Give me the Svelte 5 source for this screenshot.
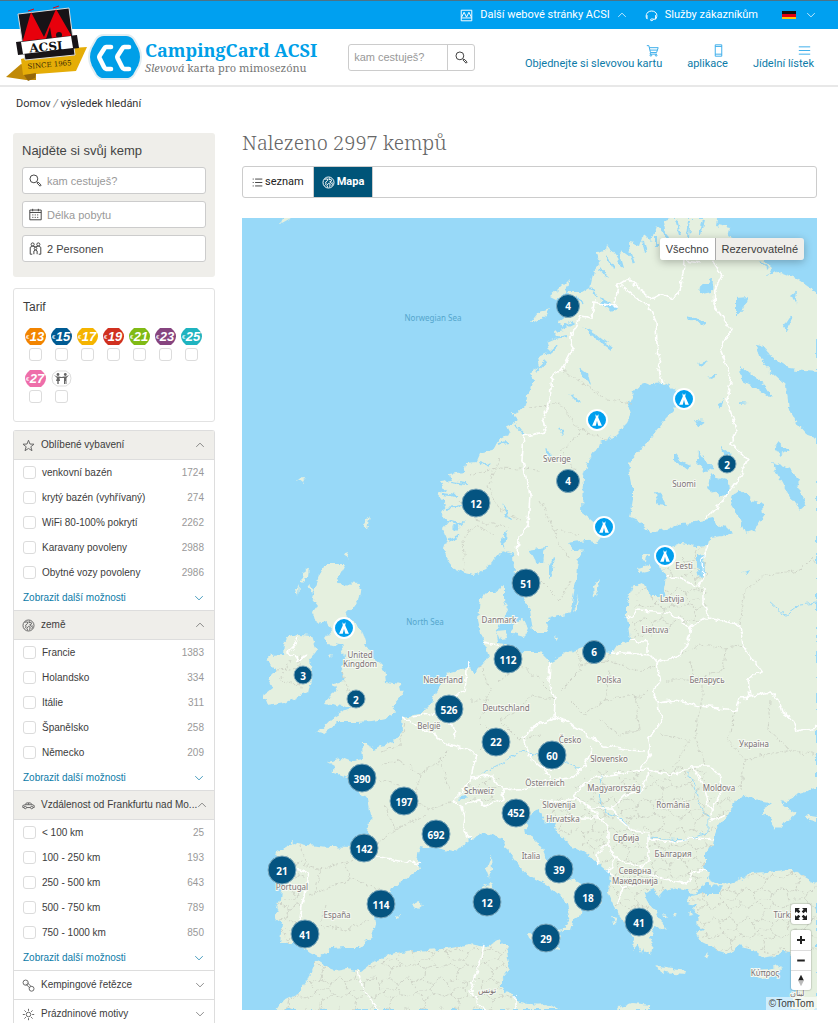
<script lang="ts">
   type Facet = { icon: string; title: string; items: [string, number][] };

   const prices = [
      { price: 13, color: "#f28400" },
      { price: 15, color: "#005b93" },
      { price: 17, color: "#f5b400" },
      { price: 19, color: "#d0301f" },
      { price: 21, color: "#80ba15" },
      { price: 23, color: "#86447f" },
      { price: 25, color: "#1fb3bf" },
      { price: 27, color: "#ee6eaa" },
   ];

   const facets: Facet[] = [
      {
         icon: "star",
         title: "Oblíbené vybavení",
         items: [
            ["venkovní bazén", 1724],
            ["krytý bazén (vyhřívaný)", 274],
            ["WiFi 80-100% pokrytí", 2262],
            ["Karavany povoleny", 2988],
            ["Obytné vozy povoleny", 2986],
         ],
      },
      {
         icon: "globe",
         title: "země",
         items: [
            ["Francie", 1383],
            ["Holandsko", 334],
            ["Itálie", 311],
            ["Španělsko", 258],
            ["Německo", 209],
         ],
      },
      {
         icon: "car",
         title: "Vzdálenost od Frankfurtu nad Mo...",
         items: [
            ["< 100 km", 25],
            ["100 - 250 km", 193],
            ["250 - 500 km", 643],
            ["500 - 750 km", 789],
            ["750 - 1000 km", 850],
         ],
      },
      { icon: "chain", title: "Kempingové řetězce", items: [] },
      { icon: "sun", title: "Prázdninové motivy", items: [] },
   ];

   // map viewport: origin and size of the drawing
   const map = { x: 242, y: 218, width: 575, height: 792 };

   const clusters: [number, number, number][] = [
      [568, 306, 4],
      [476, 503, 12],
      [568, 481, 4],
      [727, 464, 2],
      [526, 583, 51],
      [508, 659, 112],
      [594, 652, 6],
      [303, 675, 3],
      [356, 699, 2],
      [449, 709, 526],
      [496, 742, 22],
      [552, 755, 60],
      [362, 778, 390],
      [404, 801, 197],
      [516, 813, 452],
      [436, 834, 692],
      [364, 848, 142],
      [282, 870, 21],
      [381, 904, 114],
      [305, 934, 41],
      [487, 902, 12],
      [559, 869, 39],
      [588, 897, 18],
      [546, 938, 29],
      [639, 922, 41],
   ];

   const campsites: [number, number][] = [
      [597, 420],
      [684, 399],
      [604, 527],
      [665, 556],
      [344, 628],
   ];

   const countries: [number, number, string][] = [
      [557, 462, "Sverige"],
      [684, 487, "Suomi"],
      [684, 569, "Eesti"],
      [672, 602, "Latvija"],
      [655, 633, "Lietuva"],
      [499, 623, "Danmark"],
      [360, 658, "United"],
      [360, 667, "Kingdom"],
      [443, 683, "Nederland"],
      [429, 729, "België"],
      [506, 711, "Deutschland"],
      [609, 683, "Polska"],
      [707, 683, "Беларусь"],
      [570, 743, "Česko"],
      [754, 747, "Україна"],
      [609, 762, "Slovensko"],
      [545, 786, "Österreich"],
      [479, 794, "Schweiz"],
      [614, 791, "Magyarország"],
      [719, 791, "Moldova"],
      [559, 808, "Slovenija"],
      [563, 822, "Hrvatska"],
      [673, 808, "România"],
      [626, 841, "Србија"],
      [673, 857, "България"],
      [531, 859, "Italia"],
      [635, 874, "Северна"],
      [635, 884, "Македонија"],
      [292, 890, "Portugal"],
      [337, 918, "España"],
      [787, 918, "Türkiye"],
      [765, 976, "Κύπρος"],
      [797, 996, "لبنان"],
      [487, 993, "تونس"],
   ];

   const eurasia =
      "M448 561L444 548L447 540L442 528L448 521L440 512L446 504L438 494L446 490L440 482L452 480L450 474L464 472L466 464L476 463L480 454L492 451L498 440L510 434L506 426L518 420L512 414L524 408L526 398L531 390L534 380L530 373L540 366L538 357L549 352L547 343L556 339L553 331L563 329L558 320L566 314L560 310L573 301L568 292L582 292L590 287L594 270L600 262L597 254L606 250L607 244L617 258L622 250L630 256L629 243L640 246L644 234L652 242L657 226L666 236L664 221L673 218L717 218L716 225L730 228L728 236L744 243L741 252L760 257L772 268L768 276L780 272L796 278L817 293" +
      "L817 788L800 793L788 800L780 803L786 808L797 814L790 820L780 826L776 830L772 824L771 817L762 814L765 807L770 803L758 801L752 795L740 797L733 805L728 815L722 822L716 830L713 845L705 855L705 867L709 872L707 878L714 882L730 884L735 882L752 873L770 872L790 869L805 877L817 884" +
      "L817 1010L791 1010L797 985L795 960L791 953L783 952L773 956L763 958L753 950L737 946L730 955L720 952L712 947L702 942L697 933L704 931L695 923L700 916L692 910L696 905L687 903L690 897L703 894L717 894L722 888L708 883L697 890L693 896L688 889L677 887L663 890L658 896L654 889L645 893L647 903L655 910L662 923L668 931L657 926L652 930L655 937L649 937L652 945L650 955L644 948L642 953L638 944L633 950L634 938L627 927L620 917L612 903L608 893L610 873L598 863L583 853L567 843L557 830L550 818L545 824L540 810L532 812" +
      "L525 818L527 833L537 841L544 850L549 863L563 875L577 882L592 891L601 901L598 907L590 902L582 906L581 915L573 920L570 930L563 930L570 917L567 903L557 893L543 883L530 877L520 868L512 857L502 840L493 834L485 832L473 838L468 843L453 852L446 850L435 848L420 846L417 858L421 868L405 880L392 888L386 900L374 912L375 925L372 937L360 947L345 947L332 948L320 957L310 952L298 943L280 943L282 923L274 918L280 900L282 880L276 853L284 848L293 842L307 845L330 847L350 848L366 840L368 833L371 815L368 800L362 793L348 778L332 772L335 766L328 762L342 758L352 762L363 760L362 743L368 743L372 749L385 745L394 742L402 733L401 718L422 713L432 703L438 687L442 680L448 673L456 671L468 667L474 673L482 665L489 657L487 648L483 642L478 620L480 600L488 592L495 592L504 585L504 600L508 610L502 620L497 633L498 643L508 645L508 653L525 652L540 652L550 662L573 650L590 645L604 652L612 653L617 645L630 640L627 618L627 603L633 587L643 583L652 597L664 597L667 577L660 567L655 552L668 548L683 543L695 546L708 545L710 538L722 536L733 533L727 528L717 525L713 518L695 522L680 523L665 530L650 533L640 522L630 518L633 500L633 487L628 463L643 447L655 432L667 417L677 407L675 390L663 383L650 385L643 382L633 393L628 405L631 415L627 423L613 437L600 443L587 463L583 477L582 513L590 519L602 530L597 543L580 553L577 567L575 587L570 613L550 618L545 632L533 632L530 610L522 597L519 580L514 570L513 553L502 550L492 563L475 575L465 573L455 570Z";

   const africa =
      "M276 1010L283 1000L298 993L308 980L315 962L320 960L324 966L335 970L347 968L361 971L372 963L385 957L400 953L415 951L440 949L470 944L486 947L498 940L503 945L510 945L507 953L510 968L500 980L500 988L513 995L520 1002L530 1003L545 1005L560 1010Z";

   const islands = [
      "M326 564L346 564L340 575L336 584L361 585L358 600L351 610L345 614L356 624L362 630L366 643L372 655L382 665L385 675L386 682L400 684L402 695L392 706L397 712L386 718L372 721L355 722L338 722L322 734L318 733L332 718L342 712L352 708L342 706L325 703L331 694L337 690L333 683L344 681L341 672L345 660L341 645L326 643L324 640L332 630L328 622L316 624L313 613L318 606L312 598L316 585L320 574Z",
      "M288 637L300 635L312 636L317 650L309 660L312 675L308 692L285 703L267 706L263 696L273 688L268 678L276 670L267 661L270 655L283 654L284 644Z",
      "M301 574L309 568L308 576L302 582Z",
      "M308 585L314 590L311 594Z",
      "M296 590L299 584L298 598Z",
      "M344 553L349 551L347 558Z",
      "M329 656L332 653L331 659Z",
      "M486 870L491 856L492 870L489 878Z",
      "M482 887L491 882L494 892L491 910L483 911Z",
      "M527 933L545 934L562 929L558 944L559 950L548 947L530 940Z",
      "M497 632L506 631L507 638L500 639Z",
      "M512 626L524 617L528 626L524 637L513 634Z",
      "M593 586L600 579L597 592L594 597Z",
      "M573 612L579 594L576 610Z",
      "M554 635L558 637L556 641Z",
      "M638 568L651 564L650 571L640 573Z",
      "M642 555L648 555L647 561L643 560Z",
      "M655 966L672 969L686 971L685 974L664 972Z",
      "M755 970L768 969L782 965L774 974L764 979L757 976Z",
      "M411 904L418 901L423 905L417 910Z",
      "M396 916L400 915L398 919Z",
      "M296 479L305 478L302 484Z",
      "M364 525L370 516L367 530Z",
      "M688 913L694 914L692 917Z",
      "M672 916L677 914L675 918Z",
      "M663 913L668 918L664 918Z",
      "M704 957L709 952L707 959Z",
      "M612 917L617 918L616 924Z",
      "M530 322L538 312L550 308L545 316L534 322Z",
      "M550 297L558 290L569 279L566 292L556 300Z",
      "M282 218L291 218L280 224Z",
      "M532 1004L546 1003L558 1010L530 1010Z",
      "M617 1008L632 1003L650 1005L650 1010L618 1010Z",
      "M805 815L817 817L817 822L806 819Z",
   ];

   const lakes = [
      "M757 345L763 346L770 355L780 362L790 369L805 371L817 372L817 438L806 434L797 424L789 410L786 385L775 375L765 366L760 357Z",
      "M733 495L740 490L752 500L763 505L764 515L754 530L745 533L738 516L730 503Z",
      "M780 478L790 480L800 490L806 505L800 510L792 500Z",
      "M697 555L704 554L705 573L700 577L697 567Z",
      "M528 550L545 547L543 563L535 562Z",
      "M549 567L553 558L556 560L549 580Z",
      "M567 543L585 540L600 544L592 551L573 550Z",
      "M698 290L713 277L712 292L702 294Z",
      "M736 298L748 297L742 310L736 317Z",
      "M688 315L700 319L706 323L703 325L690 319Z",
      "M582 326L597 335L613 348L611 350L595 338Z",
      "M600 297L616 307L612 312L602 303Z",
      "M740 365L749 373L764 384L771 395L768 397L755 387L741 380Z",
      "M778 441L788 450L780 456L774 447Z",
      "M772 462L788 468L800 480L797 487L780 480Z",
      "M694 420L706 421L698 427Z",
      "M675 453L682 462L691 466L687 470L675 461Z",
      "M698 450L706 462L714 468L706 472L697 462Z",
      "M720 446L731 456L724 456Z",
      "M710 475L728 480L729 492L720 497L708 488Z",
      "M654 490L661 496L666 506L658 505Z",
      "M784 325L790 316L791 324L786 332Z",
      "M792 295L797 291L795 304Z",
      "M742 572L750 570L747 575Z",
      "M698 364L708 360L702 367Z",
      "M708 376L718 373L714 378Z",
      "M717 405L724 400L720 410Z",
      "M740 402L749 403L741 404Z",
      "M580 368L588 374L591 386L584 379Z",
      "M569 393L582 403L578 404Z",
      "M558 428L562 430L563 437Z",
      "M545 450L552 454L550 460Z",
      "M500 540L507 532L505 548Z",
      "M452 527L466 520L456 531Z",
      "M502 503L508 513L512 521L505 514Z",
      "M704 887L722 885L720 892L706 892Z",
      "M457 798L465 796L464 799Z",
   ];

   // jagged inlets along the Norwegian coast
   const fjords = "M536 372L546 362M545 356L556 346M556 338L568 336M562 328L574 322M575 296L584 304M590 286L598 298M598 268L608 276M606 256L614 268M618 254L622 268M630 252L634 262M643 240L646 254M656 236L656 248M664 230L670 244M676 220L680 234M690 220L688 236M704 220L700 234M730 240L738 250M768 268L760 262M516 424L524 434M498 444L508 442M480 462L490 466M452 482L466 484M442 494L456 496M446 508L462 506M444 520L458 524M448 540L458 536";

   const borders = [
      "M701 262L684 260L683 275L680 290L673 300L662 294L652 299L640 290L630 278L618 286L615 306L594 302L592 318L580 316L571 336L573 348L562 370L552 375L550 400L542 418L546 432L524 436L522 460L530 495L528 525L518 540L517 556",
      "M622 286L640 301L650 308L656 322L657 345L660 360L658 370L663 383",
      "M712 260L722 275L715 290L714 305L731 330L720 350L731 376L727 400L737 430L731 442L748 460L738 480L722 502L706 518",
      "M708 545L702 560L703 578L698 587L686 582L676 577L666 578",
      "M627 618L637 611L655 612L670 613L691 627L708 617L703 600L703 588",
      "M691 627L688 640L681 655L657 663L650 655L612 652",
      "M630 640L647 642L647 653",
      "M708 617L722 620L740 626L743 645L753 660L762 672L748 678L750 697L770 692L778 700L782 712L794 720L797 732L817 728",
      "M657 663L660 680L653 694L658 703L675 700L700 706L718 708L737 710L740 698L750 697",
      "M658 703L661 722L648 740L650 755L640 770",
      "M550 662L549 682L555 700L554 718L530 729L524 738L530 758L545 770L560 768",
      "M554 718L568 722L575 728L592 738L605 746L625 750L645 751",
      "M545 770L552 780L570 778L585 765L592 748",
      "M592 778L640 770L655 771L672 775L693 766L710 766L721 778L722 790L710 813L711 820L725 814",
      "M693 766L705 790L711 813",
      "M573 795L592 778M573 795L590 808L612 808L625 795L642 790L650 772",
      "M590 808L600 818L608 826L608 845L596 855L598 863",
      "M612 808L620 820L632 830L648 832L650 840L675 842L697 838L714 840",
      "M608 845L615 858L607 872M615 858L640 868L648 860L648 838M640 868L665 880L688 884L692 872L707 870",
      "M610 873L622 888L618 904M622 888L650 880",
      "M540 800L560 802L575 798M562 818L605 818",
      "M468 660L465 690L450 700L440 712L412 717M440 712L452 724L455 738M430 731L447 744L470 750L476 754L471 778L465 788L453 800L462 805L465 818L463 832L472 838",
      "M471 778L492 776L502 790L503 800L485 806L478 800L465 805M502 790L530 788L545 780",
      "M364 857L378 857L400 860L420 864",
      "M283 869L300 870L310 874L305 890L302 905L300 920L297 943",
      "M357 971L364 990L378 1010M484 945L478 970L470 990L484 1010M516 996L516 1010",
      "M308 654L300 660L288 652L295 645L298 638",
      "M483 642L497 645",
      "M402 717L420 727L430 731",
   ];

   const regions = [
      "M563 370L580 382L608 400L632 404M530 408L560 403L580 430L605 440M585 430L560 450L575 470M470 475L500 468L540 470M460 500L475 520L508 528M465 570L463 540L475 525L495 535M500 460L488 485L500 510L520 520",
      "M555 700L530 695L520 710L500 720L520 740L540 735M480 665L490 690L480 720L495 735L480 750M500 680L520 665L540 680L550 690M470 700L490 700",
      "M578 650L580 670L560 690M580 665L605 660L612 652M605 660L640 672L655 665M605 700L585 715L570 700M605 700L635 695L640 730M635 700L650 690M600 720L620 735L640 730M605 700L610 670",
      "M670 660L700 645L725 648L723 670L695 680L665 680M725 648L745 645M702 680L702 706M690 660L695 680",
      "M700 706L695 740L705 765M735 711L728 740L745 760L740 790M770 700L768 730L790 750L817 755M660 735L690 740M745 760L790 750M690 740L672 770",
      "M382 752L400 745L405 725M400 760L380 765M400 760L420 775L440 760L450 750M420 775L415 800L430 810L455 800M385 805L395 830L375 845M395 830L425 815M440 760L450 790M380 780L400 785",
      "M300 845L305 865L320 870L350 860L360 845M310 895L335 885L355 880L380 890M325 905L320 925L345 930L370 920M345 860L350 880M320 870L315 895",
      "M740 625L745 590L765 575L800 570L812 558L817 565",
      "M290 660L280 680L300 685M300 655L300 690M275 670L305 668M341 672L350 700",
      "M540 500L550 520L560 545L570 560M530 570L560 600L570 580M555 530L580 535",
   ];

   const uid = $props.id();
   let view = $state("map");
   let onlyBookable = $state(true);
   let open = $state([true, true, true, false, false]);

   const size = (count: number) => (count >= 10 ? "large" : count >= 4 ? "medium" : "small");
   const place = (x: number, y: number) =>
      `left: ${((x - map.x) / map.width) * 100}%; top: ${((y - map.y) / map.height) * 100}%`;
</script>

{#snippet icon(name: string)}
   <svg class="icon {name}" viewBox="0 0 16 16" aria-hidden="true">
      {#if name === "star"}
         <path d="M8 1.5L9.8 6.2L14.8 6.4L10.9 9.5L12.3 14.4L8 11.6L3.7 14.4L5.1 9.5L1.2 6.4L6.2 6.2Z" />
      {:else if name === "globe"}
         <circle cx="8" cy="8" r="6.8" />
         <path d="M3 4L6.5 3.5L7 5.5L4.5 7.5L5 10L3.5 11.5M7 14L6 11.5L8 9L10 10L9.5 13.5M9 2L8.5 4.5L11 4L12 6L9.5 7L11 9L13.5 8.5M12 12L13 10" />
      {:else if name === "car"}
         <path d="M1 10.5V8L4 7L5.5 4.8H10.5L12.5 7L15 8V10.5H13.5M10.5 10.5H5.5M2.5 10.5H1M4 7H12.5M8 5V7" />
         <circle cx="4" cy="10.5" r="1.5" />
         <circle cx="12" cy="10.5" r="1.5" />
      {:else if name === "chain"}
         <circle cx="4.5" cy="4.5" r="3.2" />
         <circle cx="11.8" cy="12" r="3" />
         <path d="M4.5 6L9.5 11M6.5 4.5L11.5 9.5" />
      {:else if name === "sun"}
         <circle cx="8" cy="8" r="2.8" />
         <path d="M8 1V3.5M8 12.5V15M1 8H3.5M12.5 8H15M3 3L4.8 4.8M11.2 11.2L13 13M13 3L11.2 4.8M4.8 11.2L3 13" />
      {:else if name === "search"}
         <circle cx="6" cy="6" r="4.8" />
         <path d="M9.4 9.4L10.6 10.6M10 11.2L11.2 10L15 13.6L13.6 15Z" />
      {:else if name === "calendar"}
         <path d="M1 2.5H15V14.5H1ZM1 5.5H15M4.5 1V4M11.5 1V4" />
         <path stroke-dasharray="1.4 1.6" d="M4 8.5H13M4 11.5H13" />
      {:else if name === "people"}
         <circle cx="4.5" cy="3" r="1.9" />
         <circle cx="11.5" cy="3" r="1.9" />
         <circle cx="8" cy="8" r="1.6" />
         <path d="M4 15H1.5V6.5L4.5 5L8 6L11.5 5L14.5 6.5V15H12M6 15V11L8 9.8L10 11V15" />
      {:else if name === "up"}
         <path d="M2 11L8 5L14 11" />
      {:else if name === "down"}
         <path d="M2 5L8 11L14 5" />
      {:else if name === "list"}
         <path d="M1 3H2.5M1 8H2.5M1 13H2.5M4.5 3H15M4.5 8H15M4.5 13H15" />
      {:else if name === "acsi"}
         <path d="M1.5 1.5H14.5V14.5H1.5ZM1.5 11H14.5M2 10L5 4L8 10L11 4L14 10" />
      {:else if name === "headset"}
         <path d="M3 12.5C0 10.5 1 2.5 8 2.5C15 2.5 16 9 13 12.5H10.5M2.5 7.5V12M13 7.5V12.5M10.5 12.5C10 14.5 7 15 6.5 13.5C7 12 9 12 10.5 12.5" />
      {:else if name === "cart"}
         <path d="M1 2H3.5L5.5 10.5H13L15 4.5H4.2M4.8 7.5H14M5.5 10.5L5 12.5H13.5" />
         <circle cx="6" cy="14" r="1" />
         <circle cx="12.5" cy="14" r="1" />
      {:else if name === "phone"}
         <path d="M4 1H12V15H4ZM4 3H12M4 12.5H12" />
      {:else if name === "menu"}
         <path d="M1 3.5H15M1 8H15M1 12.5H15" />
      {/if}
   </svg>
{/snippet}

<header>
   <div class="topbar">
      <button class="top-item">{@render icon("acsi")}Další webové stránky ACSI {@render icon("up")}</button>
      <a class="top-item" href="#service">{@render icon("headset")}Služby zákazníkům</a>
      <button class="top-item language" aria-label="Deutsch">
         <svg class="flag" viewBox="0 0 14 8" aria-hidden="true">
            <path fill="#111" d="M0 0H14V3H0Z" />
            <path fill="#e00012" d="M0 3H14V6H0Z" />
            <path fill="#ffc20e" d="M0 6H14V8H0Z" />
         </svg>
         {@render icon("down")}
      </button>
   </div>

   <div class="masthead">
      <a class="brand" href="#home">
         <svg class="acsi-logo" viewBox="0 0 82 78" aria-hidden="true">
            <path fill="#c18a08" d="M0 72L15 59L30 64L30 75L20 75Z" />
            <path fill="#e5ad07" d="M15 54L66 43L81 42L70 66L17 70Z" />
            <path fill="#94670a" d="M18 70L30 68L29 73L22 76Z" />
            <path fill="#171317" stroke="#ddd" d="M12 9L63 3L69 50L19 55Z" />
            <path fill="#e8000c" d="M25 7L38 32L50 4L65 30L66 36L15 42Z" />
            <path fill="#171317" d="M31 24L39 37L44 22L46 34L39 37Z" />
            <circle cx="53" cy="30" r="3" fill="#171317" />
            <path fill="#171317" d="M10 37L71 30L73 43L12 50Z" />
            <path fill="#fff" d="M15 37L65 31L67 43L17 49Z" />
            <path stroke="#e8000c" d="M22 6L28 4M47 3L53 1" />
            <g transform="rotate(-5 42 42)">
               <text class="logo-name" x="40" y="46">ACSI</text>
               <text class="logo-since" x="42" y="62">SINCE 1965</text>
            </g>
         </svg>
         <svg class="cc-logo" viewBox="0 0 54 46" aria-hidden="true">
            <path fill="#009fe8" stroke="#e2edf2" stroke-width="2" d="M16 1H38Q43 1 46 5L51 14Q55 23 51 32L46 41Q43 45 38 45H16Q11 45 8 41L3 32Q-1 23 3 14L8 5Q11 1 16 1Z" />
            <path fill="none" stroke="#fff" stroke-width="4.6" stroke-linejoin="round" stroke-linecap="round" d="M23 13H18Q17 13 16 15L11.500 22Q11 23 11.500 24L16 33Q17 35 18 35H23M41 13H36Q35 13 34 15L29.500 22Q29 23 29.500 24L34 33Q35 35 36 35H41" />
         </svg>
         <span class="brand-text">
            <strong>CampingCard ACSI</strong>
            <small><em>Slevová</em> karta pro mimosezónu</small>
         </span>
      </a>

      <form class="quick-search">
         <input placeholder="kam cestuješ?" aria-label="kam cestuješ?" />
         <button aria-label="Hledat">{@render icon("search")}</button>
      </form>

      <nav>
         <a href="#card">{@render icon("cart")}Objednejte si slevovou kartu</a>
         <a href="#app">{@render icon("phone")}aplikace</a>
         <a href="#menu">{@render icon("menu")}Jídelní lístek</a>
      </nav>
   </div>
</header>

<div class="breadcrumb"><a href="#home">Domov</a> <i>/</i> <span>výsledek hledání</span></div>

<div class="page">
   <aside>
      <form class="finder">
         <h2>Najděte si svůj kemp</h2>
         <div class="field">{@render icon("search")}<input placeholder="kam cestuješ?" aria-label="kam cestuješ?" /></div>
         <div class="field">{@render icon("calendar")}<input placeholder="Délka pobytu" aria-label="Délka pobytu" /></div>
         <button type="button" class="field">{@render icon("people")}2 Personen</button>
      </form>

      <section class="rates">
         <h3>Tarif</h3>
         <div class="rate-list">
            {#each prices as { price, color }}
               <label>
                  <svg viewBox="0 0 21 17" aria-hidden="true">
                     <path fill={color} d="M5 0H16L19 3Q23 8 19 14L16 17H5L2 14Q-2 8 2 3Z" />
                     <text class="euro" x="1" y="11">€</text>
                     <text class="price" x="12" y="13">{price}</text>
                  </svg>
                  <input type="checkbox" aria-label="€ {price}" />
               </label>
            {/each}
            <label>
               <svg viewBox="0 0 21 17" aria-hidden="true">
                  <path fill="#fff" stroke="#ddd" d="M6 1H15L19 4Q21 8 19 13L15 16H6L2 13Q0 8 2 4Z" />
                  <path fill="#666" d="M3 5L6 6.500H8L10.500 7L13 6.500H15L18 5L15.500 8V14H14.500V11H14V14H13V8H8.500L9 11H8V14H7.300V11H6.700V14H6V11H5L6 8Z" />
                  <circle cx="7" cy="4.500" r="1.400" fill="#666" />
                  <circle cx="14.300" cy="4.500" r="1.400" fill="#666" />
               </svg>
               <input type="checkbox" aria-label="Děti" />
            </label>
         </div>
      </section>

      <section class="facets">
         {#each facets as { icon: name, title, items }, i}
            <button class="facet-head" class:opened={open[i]} onclick={() => (open[i] = !open[i])}>
               {@render icon(name)}
               <span>{title}</span>
               {@render icon(open[i] ? "up" : "down")}
            </button>
            {#if open[i]}
               <div class="facet-body">
                  {#each items as [label, count], j}
                     <div class="option">
                        <input type="checkbox" id="{uid}-{i}-{j}" />
                        <label for="{uid}-{i}-{j}">{label}</label>
                        <span>{count}</span>
                     </div>
                  {/each}
                  <button class="more">Zobrazit další možnosti {@render icon("down")}</button>
               </div>
            {/if}
         {/each}
      </section>
   </aside>

   <main>
      <h1>Nalezeno 2997 kempů</h1>

      <div class="tabs">
         <button class:active={view === "list"} onclick={() => (view = "list")}>{@render icon("list")}seznam</button>
         <button class:active={view === "map"} onclick={() => (view = "map")}>{@render icon("globe")}Mapa</button>
      </div>

      <div class="map">
         <svg class="canvas" viewBox="{map.x} {map.y} {map.width} {map.height}" aria-hidden="true">
            <defs>
               <filter id="rough" x="0" y="0" width="100%" height="100%">
                  <feTurbulence type="fractalNoise" baseFrequency="0.14" numOctaves="3" seed="7" />
                  <feDisplacementMap in="SourceGraphic" scale="7" xChannelSelector="R" yChannelSelector="G" />
               </filter>
               <pattern id="districts" width="34" height="30" patternUnits="userSpaceOnUse">
                  <path class="region" d="M0 8L9 3L17 9L15 19L25 24L34 17M17 9L27 5L34 8M9 3L12 0M25 24L22 30L12 30M15 19L5 22L0 17M27 5L24 0M5 22L7 30" />
               </pattern>
               <clipPath id="dense">
                  <path d="M275 960L520 940L520 1010L275 1010ZM590 770L650 770L700 765L740 800L700 880L620 930L600 860L540 815ZM690 880L817 865L817 960L690 950ZM640 580L705 545L710 620L630 640ZM465 780L500 778L500 800L465 805ZM275 850L305 860L300 945L275 945Z" />
               </clipPath>
            </defs>
            <rect class="sea" x={map.x} y={map.y} width={map.width} height={map.height} />
            <g filter="url(#rough)">
               <g class="land">
                  <path d={eurasia} />
                  <path d={africa} />
                  {#each islands as d}
                     <path {d} />
                  {/each}
               </g>
               <g clip-path="url(#dense)" fill="url(#districts)">
                  <path d={eurasia} />
                  <path d={africa} />
               </g>
               {#each regions as d}
                  <path class="region" {d} />
               {/each}
               {#each lakes as d}
                  <path class="sea" {d} />
               {/each}
               <path class="fjord" d={fjords} />
               <path class="river" d="M480 774L500 764L520 752L540 755L580 768M602 775L600 800L605 812L620 818L630 828M687 772L695 785L700 805L708 818L708 832L688 840M770 602L785 615L800 604L817 602M648 838L688 840" />
               {#each borders as d}
                  <path class="border" {d} />
               {/each}
            </g>
            <text class="sea-name" x="433" y="321">Norwegian Sea</text>
            <text class="sea-name" x="425" y="625">North Sea</text>
            {#each countries as [x, y, name]}
               <text class="country" {x} {y}>{name}</text>
            {/each}
         </svg>

         {#each campsites as [x, y]}
            <button class="marker campsite" style={place(x, y)} aria-label="Kemp">
               <svg viewBox="0 0 22 22" aria-hidden="true">
                  <path fill="#fff" d="M9 4L11 6L13 4L12.500 8L17 18H12.500L11 12L9.500 18H5L9.500 8Z" />
               </svg>
            </button>
         {/each}
         {#each clusters as [x, y, count]}
            <button class="marker cluster {size(count)}" style={place(x, y)}>{count}</button>
         {/each}

         <div class="switch">
            <button class:on={!onlyBookable} onclick={() => (onlyBookable = false)}>Všechno</button>
            <button class:on={onlyBookable} onclick={() => (onlyBookable = true)}>Rezervovatelné</button>
         </div>

         <div class="controls">
            <button class="fullscreen" aria-label="Celá obrazovka">
               <svg viewBox="0 0 20 20" aria-hidden="true">
                  <path fill="#222" d="M4 4H9L7.4 5.6L9.3 7.5L7.5 9.3L5.6 7.4L4 9ZM16 4V9L14.4 7.4L12.5 9.3L10.7 7.5L12.6 5.6L11 4ZM4 16V11L5.6 12.6L7.5 10.7L9.3 12.5L7.4 14.4L9 16ZM16 16H11L12.6 14.4L10.7 12.5L12.5 10.7L14.4 12.6L16 11Z" />
               </svg>
            </button>
            <div class="zoom">
               <button aria-label="Přiblížit"><svg viewBox="0 0 20 20" aria-hidden="true"><path stroke="#222" stroke-width="2" d="M6 10H14M10 6V14" /></svg></button>
               <button aria-label="Oddálit"><svg viewBox="0 0 20 20" aria-hidden="true"><path stroke="#222" stroke-width="2" d="M6 10H14" /></svg></button>
               <button aria-label="Sever"><svg viewBox="0 0 20 20" aria-hidden="true"><path fill="#222" d="M7 10L10 4L13 10Z" /><path fill="#bbb" d="M7 10L10 16L13 10Z" /></svg></button>
            </div>
         </div>
         <a class="credit" href="#tomtom">©TomTom</a>
      </div>
   </main>
</div>

<style>
   :global(body) {
      margin: 0;
      background: #fff;
      color: #3c3c3c;
      font: 10px/16px "Liberation Sans", Arial, sans-serif;
   }

   button,
   input {
      margin: 0;
      padding: 0;
      border: 0;
      background: none;
      color: inherit;
      font: inherit;
      box-sizing: border-box;
   }

   button {
      cursor: pointer;
   }

   a {
      color: inherit;
      text-decoration: none;
   }

   h1,
   h2,
   h3 {
      margin: 0;
      font-weight: 400;
   }

   .icon {
      width: 13px;
      height: 13px;
      flex: none;
      fill: none;
      stroke: currentColor;
      stroke-width: 1.2;
   }

   .icon.up,
   .icon.down {
      width: 10px;
      height: 10px;
   }

   input[type="checkbox"] {
      appearance: none;
      width: 13px;
      height: 13px;
      flex: none;
      border: 1px solid #dcdcdc;
      border-radius: 3px;
      background: #fff;
   }

   .topbar {
      display: flex;
      justify-content: flex-end;
      align-items: center;
      gap: 18px;
      height: 29px;
      padding: 0 22px;
      box-sizing: border-box;
      border-top: 1px solid #4c7286;
      background: #00a0f0;
      color: #fff;
      font: 11px/16px Roboto, sans-serif;
   }

   .top-item {
      display: flex;
      align-items: center;
      gap: 7px;
   }

   .language {
      margin-left: 6px;
      gap: 10px;
   }

   .flag {
      width: 14px;
      height: 8px;
   }

   .masthead {
      display: flex;
      align-items: center;
      height: 58px;
      padding: 0 24px 0 88px;
      box-sizing: border-box;
      border-bottom: 2px solid #e8e8e8;
   }

   .brand {
      display: flex;
      align-items: center;
      gap: 3px;
   }

   /* the shield hangs over the blue bar */
   .acsi-logo {
      position: absolute;
      top: 5px;
      left: 6px;
      width: 82px;
      height: 78px;
   }

   .logo-name,
   .logo-since {
      font-family: "DejaVu Serif", serif;
      text-anchor: middle;
   }

   .logo-name {
      font-size: 12px;
      font-weight: 700;
      fill: #111;
   }

   .logo-since {
      font-size: 7px;
      fill: #3a2a05;
   }

   .cc-logo {
      width: 54px;
      height: 46px;
   }

   .brand-text {
      display: flex;
      flex-direction: column;
      white-space: nowrap;
      font-family: "Noto Serif", "DejaVu Serif Condensed", "DejaVu Serif", serif;
   }

   .brand-text strong {
      color: #009fe8;
      font-size: 18px;
      line-height: 22px;
   }

   .brand-text small {
      color: #777;
      font-size: 11px;
      line-height: 14px;
   }

   .quick-search {
      display: flex;
      width: 127px;
      height: 27px;
      margin-left: 31px;
      box-sizing: border-box;
      border: 1px solid #ccc;
      border-radius: 3px;
   }

   .quick-search input {
      flex: 1;
      min-width: 0;
      padding: 0 5px;
      font-size: 11px;
   }

   .quick-search button {
      display: grid;
      place-items: center;
      width: 27px;
      border-left: 1px solid #ccc;
   }

   input::placeholder {
      color: #999;
      opacity: 1;
   }

   nav {
      display: flex;
      gap: 25px;
      margin-left: auto;
      color: #0c7ba8;
      font: 11px/14px Roboto, sans-serif;
      white-space: nowrap;
   }

   nav a {
      display: flex;
      flex-direction: column;
      align-items: flex-end;
   }

   nav .icon {
      margin-right: 3px;
      color: #3daeea;
   }

   .breadcrumb {
      padding: 9px 16px;
      font: 11px/16px Roboto, sans-serif;
      color: #333;
   }

   .breadcrumb i {
      color: #888;
   }

   .page {
      display: grid;
      grid-template-columns: 202px minmax(0, 1fr);
      gap: 27px;
      padding: 12px 21px 12px 13px;
      align-items: start;
   }

   .finder {
      display: flex;
      flex-direction: column;
      gap: 7px;
      padding: 8px 9px 15px;
      border-radius: 3px;
      background: #efeeea;
   }

   .finder h2 {
      color: #444;
      font-size: 13px;
      line-height: 19px;
   }

   .field {
      display: flex;
      align-items: center;
      gap: 5px;
      height: 27px;
      padding: 0 6px;
      box-sizing: border-box;
      border: 1px solid #ccc;
      border-radius: 3px;
      background: #fff;
      color: #444;
      font-size: 11px;
   }

   .field input {
      flex: 1;
      min-width: 0;
   }

   .rates {
      margin-top: 11px;
      padding: 10px 9px 18px;
      border: 1px solid #e2e2e2;
      border-radius: 3px;
   }

   .rates h3 {
      font-size: 12px;
      line-height: 16px;
   }

   .rate-list {
      display: flex;
      flex-wrap: wrap;
      gap: 9px 5px;
      margin: 13px 0 0 2px;
   }

   .rate-list label {
      display: flex;
      flex-direction: column;
      align-items: center;
      gap: 3px;
   }

   .rate-list svg {
      width: 21px;
      height: 17px;
   }

   .price {
      fill: #fff;
      font: italic 700 13px "Liberation Sans", sans-serif;
      text-anchor: middle;
   }

   .euro {
      fill: #fff;
      font-size: 6px;
   }

   .facets {
      margin-top: 8px;
      border: 1px solid #ddd;
      border-bottom: 0;
      border-radius: 3px 3px 0 0;
   }

   .facet-head {
      display: flex;
      align-items: center;
      gap: 6px;
      width: 100%;
      height: 29px;
      padding: 0 9px 0 8px;
      border-bottom: 1px solid #ddd;
      text-align: left;
   }

   .facet-head.opened {
      background: #efeeea;
   }

   .facet-head span {
      flex: 1;
      margin-right: -6px;
      white-space: nowrap;
   }

   .facet-head .icon {
      color: #666;
   }

   .facet-body {
      border-bottom: 1px solid #ddd;
   }

   .option {
      display: flex;
      align-items: center;
      gap: 6px;
      height: 25px;
      padding: 0 10px 0 9px;
   }

   .option label {
      flex: 1;
   }

   .option span {
      color: #999;
   }

   .more {
      display: flex;
      justify-content: space-between;
      align-items: center;
      width: 100%;
      height: 25px;
      padding: 0 10px 0 9px;
      color: #0c7ba8;
   }

   h1 {
      margin-top: -4px;
      color: #666;
      font: 300 20px/28px "Noto Serif", "DejaVu Serif Condensed", "DejaVu Serif", serif;
   }

   .tabs {
      display: flex;
      height: 32px;
      margin: 9px 0 20px;
      box-sizing: border-box;
      border: 1px solid #ccc;
      border-radius: 3px;
      overflow: hidden;
   }

   .tabs button {
      display: flex;
      align-items: center;
      gap: 2px;
      padding: 0 9px;
      border-right: 1px solid #ccc;
      color: #222;
      font: 11px/16px Roboto, sans-serif;
   }

   .tabs .active {
      padding: 0 8px;
      background: #005478;
      color: #fff;
      font-weight: 700;
   }

   .icon.list {
      width: 11px;
      height: 11px;
   }

   .map {
      position: relative;
      aspect-ratio: 575 / 792;
      overflow: hidden;
   }

   .canvas {
      display: block;
      width: 100%;
   }

   .sea {
      fill: #98d9f8;
   }

   .land path {
      fill: #e5f0df;
   }

   .region,
   .border,
   .fjord,
   .river {
      fill: none;
   }

   .region {
      stroke: #c9cdc2;
      stroke-width: 0.8;
      stroke-dasharray: 3 1.5;
   }

   .border {
      stroke: #fff;
      stroke-width: 1.6;
   }

   .fjord {
      stroke: #98d9f8;
      stroke-width: 2;
   }

   .river {
      stroke: #98d9f8;
   }

   .country,
   .sea-name {
      font-family: "Noto Sans", sans-serif;
      font-size: 8px;
      text-anchor: middle;
   }

   .country {
      fill: #7d7477;
      stroke: #f5f9f2;
      stroke-width: 2;
      paint-order: stroke;
   }

   .sea-name {
      fill: #55a6cc;
   }

   .marker {
      position: absolute;
      transform: translate(-50%, -50%);
      border-radius: 50%;
   }

   .cluster {
      border: 1px solid #7fa9bb;
      background: #045481;
      color: #fff;
      font: 700 10px/12px "Noto Sans", sans-serif;
   }

   .small {
      width: 19px;
      height: 19px;
   }

   .medium {
      width: 24px;
      height: 24px;
   }

   .large {
      width: 29px;
      height: 29px;
   }

   .campsite {
      width: 22px;
      height: 22px;
      border: 2px solid #fff;
      background: #009fee;
   }

   .campsite svg,
   .controls svg {
      display: block;
      width: 100%;
      height: 100%;
   }

   .switch {
      position: absolute;
      top: 20px;
      right: 13px;
      display: flex;
      border-radius: 3px;
      box-shadow: 0 2px 8px #0004;
      overflow: hidden;
   }

   .switch button {
      height: 22px;
      padding: 0 6px;
      background: #fff;
      font-size: 11px;
   }

   .switch .on {
      border-left: 1px solid #aaa;
      background: #efeeea;
   }

   .controls {
      position: absolute;
      right: 6px;
      bottom: 20px;
      display: grid;
      gap: 6px;
   }

   .controls button {
      width: 20px;
      height: 20px;
      background: #fff;
   }

   .fullscreen,
   .zoom {
      border-radius: 3px;
      box-shadow: 0 0 1px 1px #0002;
      overflow: hidden;
   }

   .zoom {
      display: grid;
   }

   .zoom button + button {
      border-top: 1px solid #ddd;
   }

   .credit {
      position: absolute;
      right: 0;
      bottom: 0;
      padding: 0 3px;
      background: #fff8;
      line-height: 13px;
   }
</style>
